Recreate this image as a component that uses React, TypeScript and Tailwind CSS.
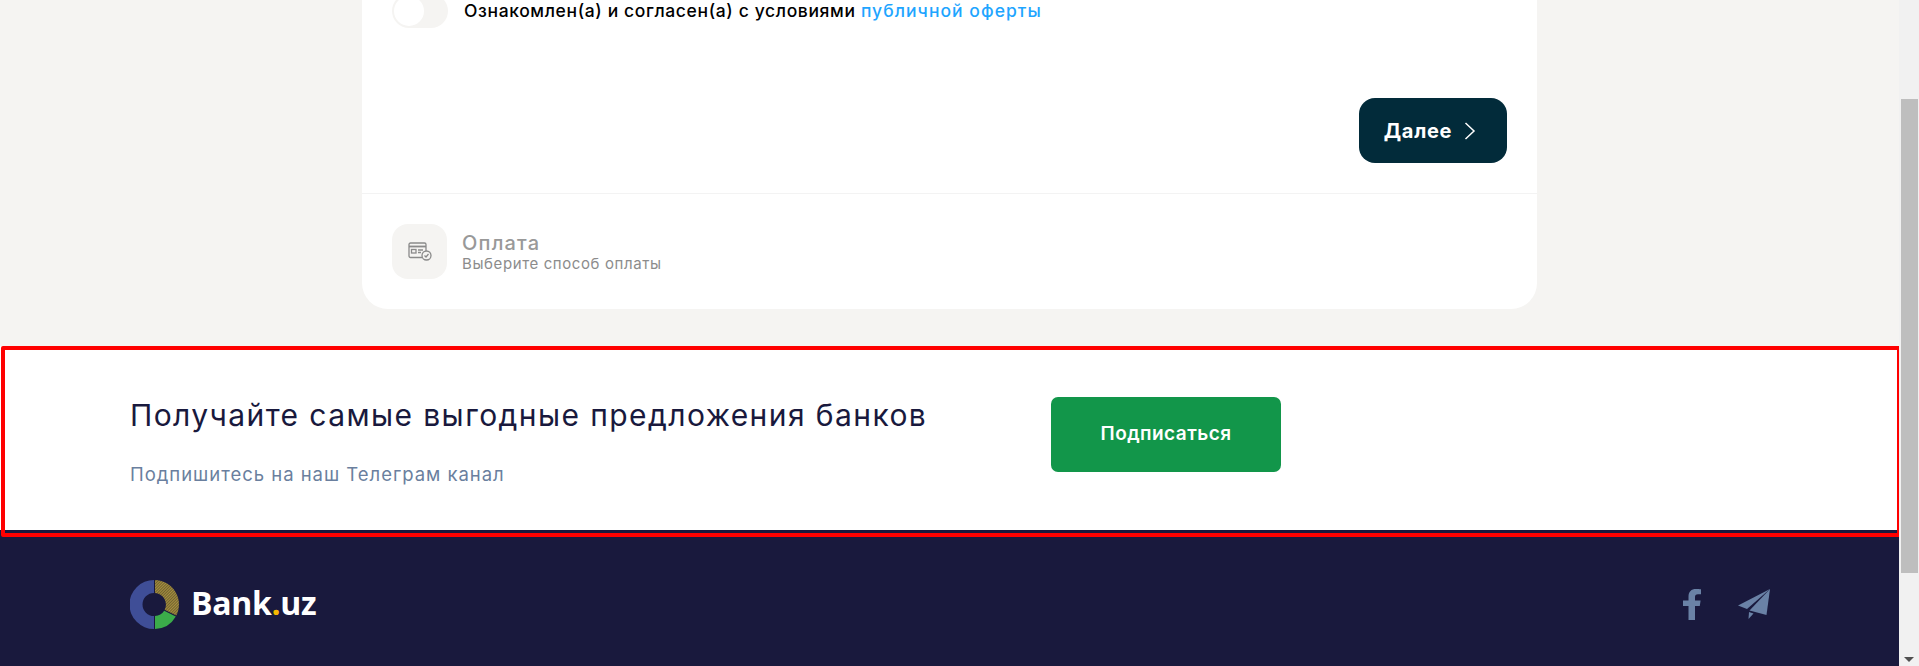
import React from "react";

const font = "font-['Inter','Noto_Sans',sans-serif]";

function PaymentIcon() {
    return (
        <svg width="24" height="19" viewBox="0 0 24 19" fill="none" stroke="#8a8a8a" strokeWidth="1.3">
            <path d="M14 15.5H2.5a1.5 1.5 0 0 1-1.5-1.5V2.5A1.5 1.5 0 0 1 2.5 1h14A1.5 1.5 0 0 1 18 2.5V9"/>
            <path d="M1 4.5h17" strokeWidth="1.8"/>
            <rect x="3.5" y="7.5" width="4.5" height="3.5"/>
            <path d="M10 8h5M10 10.5h3"/>
            <circle cx="18.5" cy="13.5" r="4.5" fill="#f5f4f2"/>
            <path d="M16.5 13.5l1.5 1.5 2.5-3"/>
        </svg>
    );
}

function Logo() {
    return (
        <svg width="49" height="49" viewBox="0 0 49 49">
            <defs>
                <pattern id="hatch" width="2" height="2" patternUnits="userSpaceOnUse" patternTransform="rotate(45)">
                    <rect width="2" height="2" fill="#a88f3f"/>
                    <rect width="1" height="2" fill="#6f6230"/>
                </pattern>
            </defs>
            <path d="M24 0A24.5 24.5 0 0 0 24 49V36A11.5 11.5 0 0 1 24 13Z" fill="#3f4e97"/>
            <path d="M25 0A24.5 24.5 0 0 1 46.3 35.6L34.7 29.7A11.5 11.5 0 0 0 25 13Z" fill="url(#hatch)"/>
            <path d="M45.8 36.6A24.5 24.5 0 0 1 25 49V36A11.5 11.5 0 0 0 34.2 30.7Z" fill="#3bab4a"/>
        </svg>
    );
}

export default function App() {
    return (
        <div className={`flex h-[666px] overflow-hidden bg-[#f5f4f2] ${font}`}>
            <div className="w-[1899px] shrink-0">
                <div className="h-[346px] overflow-hidden">
                    <div className="-mt-[6px] ml-[362px] w-[1175px] rounded-b-[26px] bg-white">
                        <div className="flex h-[199px] flex-col px-[30px]">
                            <div className="flex items-center">
                                <div className="flex h-[34px] w-[56px] items-center rounded-full bg-[#f5f4f2] pl-[2px]">
                                    <div className="h-[30px] w-[30px] rounded-full bg-white"/>
                                </div>
                                <p className="ml-[16px] text-[17.5px] font-medium tracking-[0.63px] text-black">
                                    Ознакомлен(а) и согласен(а) с условиями <a className="tracking-[1.05px] text-[#1ea5ff]">публичной оферты</a>
                                </p>
                            </div>
                            <div className="mt-[70px] flex justify-end">
                                <button className="flex h-[65px] w-[148px] items-center justify-center gap-[12px] rounded-[16px] bg-[#022b3a] pr-[6px] text-[20px] font-bold tracking-[0.7px] text-white">
                                    Далее
                                    <svg width="12" height="20" viewBox="0 0 12 20" fill="none" stroke="#fff" strokeWidth="1.5">
                                        <path d="M1.5 2l8.5 8-8.5 8"/>
                                    </svg>
                                </button>
                            </div>
                        </div>
                        <div className="flex h-[116px] gap-[15px] border-t border-[#f3f3f3] px-[30px] pt-[30px]">
                            <div className="flex h-[55px] w-[55px] items-center justify-center rounded-[16px] bg-[#f5f4f2]">
                                <PaymentIcon/>
                            </div>
                            <div className="pt-[7px]">
                                <div className="text-[20px] leading-[24px] font-medium tracking-[1.2px] text-[#999999]">Оплата</div>
                                <div className="text-[15px] leading-[18px] tracking-[0.6px] text-[#8c8c8c]">Выберите способ оплаты</div>
                            </div>
                        </div>
                    </div>
                </div>

                <section className="relative flex h-[184px] bg-white pl-[130px] pt-[51px]">
                    <div className="w-[921px]">
                        <h2 className="text-[30px] leading-[36px] font-normal tracking-[1.42px] text-[#19193d]">Получайте самые выгодные предложения банков</h2>
                        <p className="mt-[29px] text-[18.5px] leading-[24px] tracking-[0.97px] text-[#6a7f9e]">Подпишитесь на наш Телеграм канал</p>
                    </div>
                    <button className="h-[75px] w-[230px] rounded-[7px] bg-[#12964a] text-[19px] font-semibold tracking-[0.45px] text-white">Подписаться</button>
                    <div className="pointer-events-none absolute -right-[2px] left-[1px] -bottom-[7px] top-0 rounded-[2px] border-4 border-[#ff0000]"/>
                </section>

                <footer className="flex h-[136px] justify-between bg-[#19193d] pl-[130px] pr-[129px] pt-[50px]">
                    <div className="flex items-start gap-[12px]">
                        <Logo/>
                        <span className="mt-[3px] font-['Open_Sans',sans-serif] text-[32px] leading-[40px] font-bold tracking-[-0.3px] text-white">
                            Bank<span className="text-[#f5b800]">.</span>uz
                        </span>
                    </div>
                    <div className="flex items-start gap-[36px] pt-[9px]">
                        <svg width="19" height="31" viewBox="0 0 19 31" fill="#6a82a6">
                            <path d="M5.5 31V17H0v-5.5h5.5V7.5C5.5 2.5 8.5 0 12.8 0c2 0 4 .2 5.2.3v4.9h-3c-2.3 0-3 1.2-3 2.9v3.4h5.6l-.8 5.5H12V31z"/>
                        </svg>
                        <svg width="32" height="30" viewBox="0 0 32 30" fill="#6a82a6">
                            <path d="M32 0L0 16.5l9 3.5L32 0z"/>
                            <path d="M32 0L11.5 21.5 28.5 26 32 0z"/>
                            <path d="M11 23l-.5 7 5-5.5z"/>
                        </svg>
                    </div>
                </footer>
            </div>

            <div className="relative flex-1 bg-[#f1f1f1]">
                <div className="absolute left-[2px] right-[1px] top-[99px] h-[474px] bg-[#bebebe]"/>
                <div className="absolute bottom-[4px] left-[5px] h-0 w-0 border-x-[5px] border-t-[5px] border-x-transparent border-t-[#505050]"/>
            </div>
        </div>
    );
}
